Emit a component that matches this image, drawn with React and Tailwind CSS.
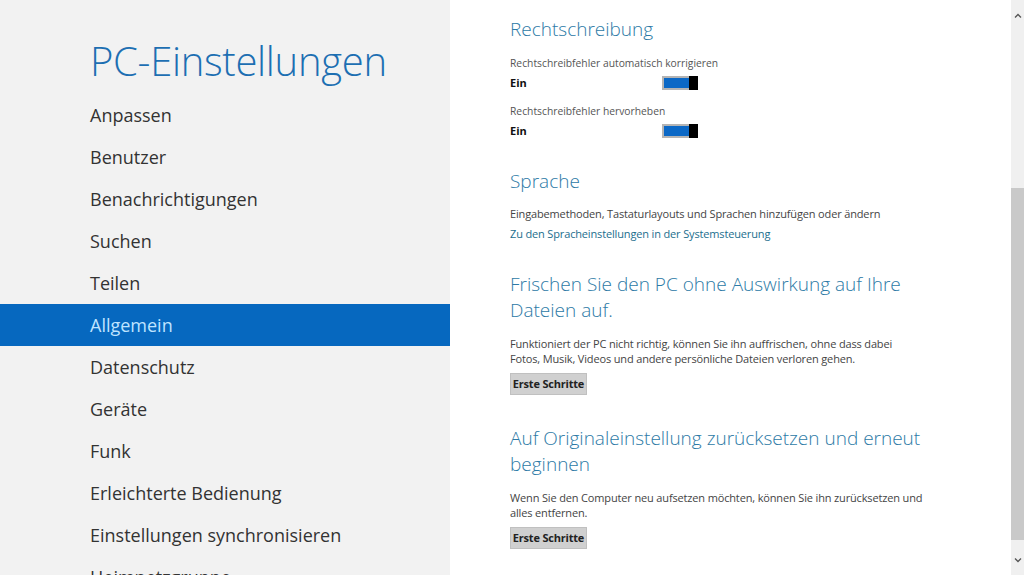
const navItems = [
  'Anpassen',
  'Benutzer',
  'Benachrichtigungen',
  'Suchen',
  'Teilen',
  'Allgemein',
  'Datenschutz',
  'Geräte',
  'Funk',
  'Erleichterte Bedienung',
  'Einstellungen synchronisieren',
  'Heimnetzgruppe',
];

const Toggle = () => (
  <div className="relative w-[36px] h-[14px] border-2 border-[#b4b4b4] bg-[#0b68c6]">
    <div className="absolute right-[-2px] top-[-2px] w-[9px] h-[14px] bg-black" />
  </div>
);

const ToggleRow = ({ label }) => (
  <div>
    <p className="text-[10.3px] leading-[16px] text-[#555]">{label}</p>
    <div className="mt-[4px] flex items-center h-[16px]">
      <span className="w-[152px] text-[11px] font-bold text-[#111]">Ein</span>
      <Toggle />
    </div>
  </div>
);

const Heading = ({ children, className = '' }) => (
  <h2 className={`text-[19px] leading-[26px] text-[#2d7aa6] font-light ${className}`}>{children}</h2>
);

const Button = ({ className = '' }) => (
  <button className={`h-[22px] w-[77px] bg-[#d0d0d0] border border-[#c0c0c0] text-[11px] font-bold text-[#222] tracking-[-0.2px] ${className}`}>
    Erste Schritte
  </button>
);

export default function App() {
  return (
    <div className="flex h-[575px] w-[1024px] overflow-hidden" style={{ fontFamily: '"Open Sans", "Noto Sans", sans-serif' }}>
      <aside className="w-[450px] bg-[#f2f2f2] pt-[37px]">
        <h1 className="pl-[90px] text-[40px] leading-[48px] font-light text-[#1d6fb2] tracking-[-0.3px] mb-[9px]">
          PC-Einstellungen
        </h1>
        <ul>
          {navItems.map((item) => (
            <li
              key={item}
              className={
                item === 'Allgemein'
                  ? 'h-[42px] flex items-center pl-[90px] text-[18px] bg-[#0668bf] text-[#bfe4ff]'
                  : 'h-[42px] flex items-center pl-[90px] text-[18px] text-[#333]'
              }
            >
              {item}
            </li>
          ))}
        </ul>
      </aside>

      <main className="flex-1 bg-white pl-[60px] pt-[16px]">
        <Heading>Rechtschreibung</Heading>
        <div className="mt-[13px] flex flex-col gap-[12px]">
          <ToggleRow label="Rechtschreibfehler automatisch korrigieren" />
          <ToggleRow label="Rechtschreibfehler hervorheben" />
        </div>

        <Heading className="mt-[29px]">Sprache</Heading>
        <p className="mt-[12px] text-[11px] leading-[16px] text-[#444] tracking-[-0.15px]">
          Eingabemethoden, Tastaturlayouts und Sprachen hinzufügen oder ändern
        </p>
        <p className="mt-[4px] text-[11px] leading-[16px] text-[#1b6e8e] tracking-[-0.15px]">
          Zu den Spracheinstellungen in der Systemsteuerung
        </p>

        <Heading className="mt-[29px] w-[420px]">Frischen Sie den PC ohne Auswirkung auf Ihre Dateien auf.</Heading>
        <p className="mt-[13px] w-[400px] text-[11px] leading-[15px] text-[#444] tracking-[-0.15px]">
          Funktioniert der PC nicht richtig, können Sie ihn auffrischen, ohne dass dabei Fotos, Musik, Videos und andere persönliche Dateien verloren gehen.
        </p>
        <Button className="mt-[7px]" />

        <Heading className="mt-[30px] w-[420px]">Auf Originaleinstellung zurücksetzen und erneut beginnen</Heading>
        <p className="mt-[13px] w-[420px] text-[11px] leading-[15px] text-[#444] tracking-[-0.15px]">
          Wenn Sie den Computer neu aufsetzen möchten, können Sie ihn zurücksetzen und alles entfernen.
        </p>
        <Button className="mt-[7px]" />
      </main>

      <div className="w-[13px] bg-[#f0f0f0] flex flex-col items-center">
        <div className="h-[30px] flex items-center justify-center text-[#555]">
          <svg width="8" height="5" viewBox="0 0 8 5"><path d="M1 4.5 L4 1.5 L7 4.5" fill="none" stroke="currentColor" strokeWidth="1.3" /></svg>
        </div>
        <div className="h-[158px]" />
        <div className="h-[352px] w-full bg-[#c9c9c9]" />
        <div className="flex-1" />
        <div className="h-[30px] flex items-center justify-center text-[#555]">
          <svg width="8" height="5" viewBox="0 0 8 5"><path d="M1 0.5 L4 3.5 L7 0.5" fill="none" stroke="currentColor" strokeWidth="1.3" /></svg>
        </div>
      </div>
    </div>
  );
}
